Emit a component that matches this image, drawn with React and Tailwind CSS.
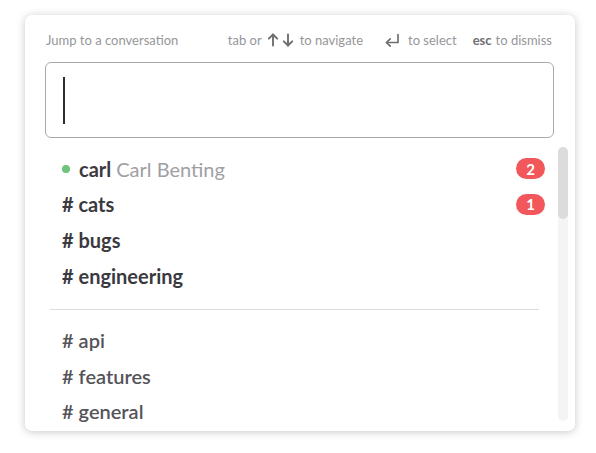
const unread = [
  { type: 'dm', name: 'carl', full: 'Carl Benting', count: 2 },
  { type: 'channel', name: 'cats', count: 1 },
  { type: 'channel', name: 'bugs' },
  { type: 'channel', name: 'engineering' },
];

const rest = ['api', 'features', 'general'];

function ReturnIcon() {
  return (
    <svg width="17" height="15" viewBox="0 0 17 15" fill="none" stroke="#6f6f73" strokeWidth="1.7" strokeLinecap="round" strokeLinejoin="round">
      <path d="M14 1.5v8H2.5" />
      <path d="M6.2 5.8L2.5 9.5l3.7 3.7" />
    </svg>
  );
}

function Arrow({ down }) {
  return (
    <svg width="12" height="14" viewBox="0 0 12 14" fill="none" stroke="#6f6f73" strokeWidth="1.9" strokeLinecap="round" strokeLinejoin="round">
      {down ? (
        <>
          <path d="M6 1.5v11" />
          <path d="M1.8 8.3L6 12.5l4.2-4.2" />
        </>
      ) : (
        <>
          <path d="M6 12.5v-11" />
          <path d="M1.8 5.7L6 1.5l4.2 4.2" />
        </>
      )}
    </svg>
  );
}

function Badge({ n }) {
  return (
    <span className="ml-auto flex h-[21px] w-[29px] items-center justify-center rounded-full bg-[#f2575b] text-[15px] font-bold text-white">
      {n}
    </span>
  );
}

export default function App() {
  return (
    <div className="min-h-screen bg-white pl-[25px] pt-[15px]" style={{ fontFamily: 'Lato, "Open Sans", sans-serif' }}>
      <div className="relative h-[416px] w-[550px] overflow-hidden rounded-[7px] bg-white shadow-[0_1px_9px_rgba(0,0,0,0.22)]">
        <div className="flex items-center pl-[21px] pr-[23px] pt-[17px] text-[13px] leading-4 text-[#96969a]">
          <span>Jump to a conversation</span>
          <span className="ml-auto">tab or</span>
          <span className="ml-[5px] flex items-center"><Arrow /></span>
          <span className="ml-[3px] flex items-center"><Arrow down /></span>
          <span className="ml-[6px]">to navigate</span>
          <span className="ml-[21px] flex items-center"><ReturnIcon /></span>
          <span className="ml-[7px]">to select</span>
          <span className="ml-[16px] font-bold text-[#6f6f73]">esc</span>
          <span className="ml-[4px]">to dismiss</span>
        </div>

        <div className="ml-[20px] mr-[21px] mt-[14px] h-[76px] rounded-[6px] border border-[#a9a9ab] pl-[17px] pt-[14px]">
          <div className="h-[47px] w-[1.5px] bg-[#2c2d30]" />
        </div>

        <div className="pt-[13px] pl-[37px] pr-[30px]">
          {unread.map(item => (
            <div key={item.name} className="flex h-[35.6px] items-center text-[20px] text-[#3b3a3f]">
              {item.type === 'dm' ? (
                <>
                  <span className="mr-[9px] h-[8px] w-[8px] rounded-full bg-[#6fc37c]" />
                  <span className="font-bold">{item.name}</span>
                  <span className="ml-[5px] text-[#a0a0a4]">{item.full}</span>
                </>
              ) : (
                <span className="font-bold"># {item.name}</span>
              )}
              {item.count && <Badge n={item.count} />}
            </div>
          ))}

          <div className="mb-[12px] ml-[-12px] mr-[6px] mt-[16px] h-px bg-[#dcdcdc]" />

          {rest.map(name => (
            <div key={name} className="flex h-[35.6px] items-center text-[20px] font-semibold text-[#555459]">
              # {name}
            </div>
          ))}
        </div>

        <div className="absolute left-[533px] top-[132px] h-[274px] w-[10px] rounded-full bg-[#f4f4f4]">
          <div className="h-[72px] w-[10px] rounded-full bg-[#dcdcdc]" />
        </div>
      </div>
    </div>
  );
}
